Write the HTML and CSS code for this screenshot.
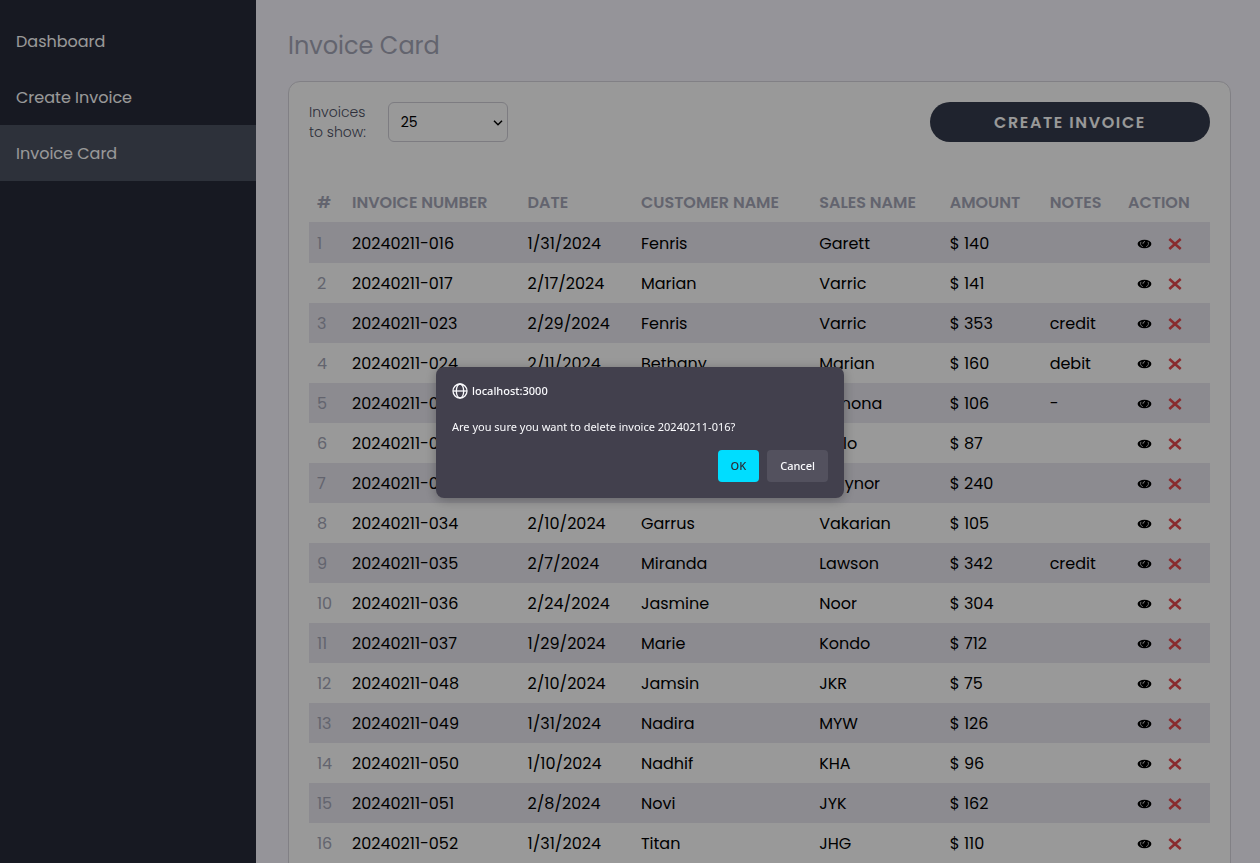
FILE: index.html
```html
<!DOCTYPE html>
<html lang="en">
<head>
<meta charset="utf-8">
<meta name="viewport" content="width=device-width, initial-scale=1">
<title>Invoice Card</title>
<link rel="stylesheet" href="styles.css">
</head>
<body>
<svg class="sprite" aria-hidden="true">
  <symbol id="eye" viewBox="0 0 14 10">
    <ellipse cx="7" cy="5" rx="6.900" ry="4.200" fill="currentColor"/>
    <path fill="none" stroke="#ccc" stroke-width=".9" d="M3.500 2.900C2.400 4.500 3.200 6.900 5.300 7.700M10.500 2.900C11.600 4.500 10.800 6.900 8.700 7.700"/>
    <path fill="none" stroke="#eee" stroke-width="1" d="M5.500 4.700C5.500 3.400 6.200 2.800 7.500 2.600"/>
  </symbol>
  <symbol id="cross" viewBox="0 0 14 12">
    <path fill="none" stroke="currentColor" stroke-width="2.600" d="M1.300 1 12.700 11M12.700 1 1.300 11"/>
  </symbol>
</svg>
<div class="app">
  <nav class="sidebar">
    <a class="nav-link" href="#">Dashboard</a>
    <a class="nav-link" href="#">Create Invoice</a>
    <a class="nav-link nav-link-active" href="#" aria-current="page">Invoice Card</a>
  </nav>
  <main class="content">
    <h1 class="title">Invoice Card</h1>
    <section class="card">
      <div class="toolbar">
        <div class="filter">
          <label class="filter-label" for="count">Invoices<br>to show:</label>
          <div class="select-wrap">
            <select class="filter-select" id="count"><option>10</option><option selected>25</option><option>50</option></select>
            <svg class="chevron" viewBox="0 0 10 6" aria-hidden="true"><path fill="none" stroke="#000" stroke-width="1.500" d="M1 .8 5 4.800 9 .8"/></svg>
          </div>
        </div>
        <button class="create" type="button">CREATE INVOICE</button>
      </div>
      <table class="invoices">
        <colgroup><col class="c-index"><col class="c-number"><col class="c-date"><col class="c-customer"><col class="c-sales"><col class="c-amount"><col class="c-notes"><col class="c-action"></colgroup>
        <thead><tr><th>#</th><th>INVOICE NUMBER</th><th>DATE</th><th>CUSTOMER NAME</th><th>SALES NAME</th><th>AMOUNT</th><th>NOTES</th><th>ACTION</th></tr></thead>
        <tbody>
          <tr><td>1</td><td>20240211-016</td><td>1/31/2024</td><td>Fenris</td><td>Garett</td><td>$ 140</td><td></td><td><div class="actions"><button class="icon-button" type="button" aria-label="View"><svg class="eye"><use href="#eye"/></svg></button><button class="icon-button danger" type="button" aria-label="Delete"><svg class="cross"><use href="#cross"/></svg></button></div></td></tr>
          <tr><td>2</td><td>20240211-017</td><td>2/17/2024</td><td>Marian</td><td>Varric</td><td>$ 141</td><td></td><td><div class="actions"><button class="icon-button" type="button" aria-label="View"><svg class="eye"><use href="#eye"/></svg></button><button class="icon-button danger" type="button" aria-label="Delete"><svg class="cross"><use href="#cross"/></svg></button></div></td></tr>
          <tr><td>3</td><td>20240211-023</td><td>2/29/2024</td><td>Fenris</td><td>Varric</td><td>$ 353</td><td>credit</td><td><div class="actions"><button class="icon-button" type="button" aria-label="View"><svg class="eye"><use href="#eye"/></svg></button><button class="icon-button danger" type="button" aria-label="Delete"><svg class="cross"><use href="#cross"/></svg></button></div></td></tr>
          <tr><td>4</td><td>20240211-024</td><td>2/11/2024</td><td>Bethany</td><td>Marian</td><td>$ 160</td><td>debit</td><td><div class="actions"><button class="icon-button" type="button" aria-label="View"><svg class="eye"><use href="#eye"/></svg></button><button class="icon-button danger" type="button" aria-label="Delete"><svg class="cross"><use href="#cross"/></svg></button></div></td></tr>
          <tr><td>5</td><td>20240211-025</td><td></td><td></td><td>Dimona</td><td>$ 106</td><td>-</td><td><div class="actions"><button class="icon-button" type="button" aria-label="View"><svg class="eye"><use href="#eye"/></svg></button><button class="icon-button danger" type="button" aria-label="Delete"><svg class="cross"><use href="#cross"/></svg></button></div></td></tr>
          <tr><td>6</td><td>20240211-032</td><td></td><td></td><td>Rollo</td><td>$ 87</td><td></td><td><div class="actions"><button class="icon-button" type="button" aria-label="View"><svg class="eye"><use href="#eye"/></svg></button><button class="icon-button danger" type="button" aria-label="Delete"><svg class="cross"><use href="#cross"/></svg></button></div></td></tr>
          <tr><td>7</td><td>20240211-033</td><td></td><td></td><td>Traynor</td><td>$ 240</td><td></td><td><div class="actions"><button class="icon-button" type="button" aria-label="View"><svg class="eye"><use href="#eye"/></svg></button><button class="icon-button danger" type="button" aria-label="Delete"><svg class="cross"><use href="#cross"/></svg></button></div></td></tr>
          <tr><td>8</td><td>20240211-034</td><td>2/10/2024</td><td>Garrus</td><td>Vakarian</td><td>$ 105</td><td></td><td><div class="actions"><button class="icon-button" type="button" aria-label="View"><svg class="eye"><use href="#eye"/></svg></button><button class="icon-button danger" type="button" aria-label="Delete"><svg class="cross"><use href="#cross"/></svg></button></div></td></tr>
          <tr><td>9</td><td>20240211-035</td><td>2/7/2024</td><td>Miranda</td><td>Lawson</td><td>$ 342</td><td>credit</td><td><div class="actions"><button class="icon-button" type="button" aria-label="View"><svg class="eye"><use href="#eye"/></svg></button><button class="icon-button danger" type="button" aria-label="Delete"><svg class="cross"><use href="#cross"/></svg></button></div></td></tr>
          <tr><td>10</td><td>20240211-036</td><td>2/24/2024</td><td>Jasmine</td><td>Noor</td><td>$ 304</td><td></td><td><div class="actions"><button class="icon-button" type="button" aria-label="View"><svg class="eye"><use href="#eye"/></svg></button><button class="icon-button danger" type="button" aria-label="Delete"><svg class="cross"><use href="#cross"/></svg></button></div></td></tr>
          <tr><td>11</td><td>20240211-037</td><td>1/29/2024</td><td>Marie</td><td>Kondo</td><td>$ 712</td><td></td><td><div class="actions"><button class="icon-button" type="button" aria-label="View"><svg class="eye"><use href="#eye"/></svg></button><button class="icon-button danger" type="button" aria-label="Delete"><svg class="cross"><use href="#cross"/></svg></button></div></td></tr>
          <tr><td>12</td><td>20240211-048</td><td>2/10/2024</td><td>Jamsin</td><td>JKR</td><td>$ 75</td><td></td><td><div class="actions"><button class="icon-button" type="button" aria-label="View"><svg class="eye"><use href="#eye"/></svg></button><button class="icon-button danger" type="button" aria-label="Delete"><svg class="cross"><use href="#cross"/></svg></button></div></td></tr>
          <tr><td>13</td><td>20240211-049</td><td>1/31/2024</td><td>Nadira</td><td>MYW</td><td>$ 126</td><td></td><td><div class="actions"><button class="icon-button" type="button" aria-label="View"><svg class="eye"><use href="#eye"/></svg></button><button class="icon-button danger" type="button" aria-label="Delete"><svg class="cross"><use href="#cross"/></svg></button></div></td></tr>
          <tr><td>14</td><td>20240211-050</td><td>1/10/2024</td><td>Nadhif</td><td>KHA</td><td>$ 96</td><td></td><td><div class="actions"><button class="icon-button" type="button" aria-label="View"><svg class="eye"><use href="#eye"/></svg></button><button class="icon-button danger" type="button" aria-label="Delete"><svg class="cross"><use href="#cross"/></svg></button></div></td></tr>
          <tr><td>15</td><td>20240211-051</td><td>2/8/2024</td><td>Novi</td><td>JYK</td><td>$ 162</td><td></td><td><div class="actions"><button class="icon-button" type="button" aria-label="View"><svg class="eye"><use href="#eye"/></svg></button><button class="icon-button danger" type="button" aria-label="Delete"><svg class="cross"><use href="#cross"/></svg></button></div></td></tr>
          <tr><td>16</td><td>20240211-052</td><td>1/31/2024</td><td>Titan</td><td>JHG</td><td>$ 110</td><td></td><td><div class="actions"><button class="icon-button" type="button" aria-label="View"><svg class="eye"><use href="#eye"/></svg></button><button class="icon-button danger" type="button" aria-label="Delete"><svg class="cross"><use href="#cross"/></svg></button></div></td></tr>
        </tbody>
      </table>
    </section>
  </main>
</div>
<div class="backdrop">
  <div class="dialog" role="alertdialog" aria-modal="true" aria-labelledby="origin" aria-describedby="message">
    <div class="dialog-head">
      <svg class="globe" viewBox="0 0 16 16" aria-hidden="true"><g fill="none" stroke="currentColor" stroke-width="1.300"><circle cx="8" cy="8" r="7"/><ellipse cx="8" cy="8" rx="3.700" ry="7"/><path d="M1 8h14"/></g></svg>
      <span id="origin">localhost:3000</span>
    </div>
    <p class="dialog-message" id="message">Are you sure you want to delete invoice 20240211-016?</p>
    <div class="dialog-buttons">
      <button class="dialog-button primary" type="button">OK</button>
      <button class="dialog-button" type="button">Cancel</button>
    </div>
  </div>
</div>
</body>
</html>
```
FILE: styles.css
```css
* { box-sizing: border-box; }
body {
  margin: 0;
  height: 100vh;
  overflow: hidden;
  background: #f8f7ff;
  color: #000;
  font: 16px/24px Poppins, Inter, "Liberation Sans", sans-serif;
}
button, select { font: inherit; }
.sprite { display: none; }
.app { display: flex; height: 100%; }
.sidebar {
  flex: 0 0 256px;
  padding-top: 13px;
  background: #272a39;
}
.nav-link {
  display: block;
  padding: 17px 16px 15px;
  color: #fff;
  text-decoration: none;
}
.nav-link-active { background: #4b5262; }
.content {
  flex: 1;
  min-width: 0;
  padding: 30px 29px 0 32px;
}
.title {
  margin: 0 0 19px;
  color: #a5a7b8;
  font-size: 24px;
  font-weight: 400;
  line-height: 32px;
}
.card {
  padding: 20px;
  border: 1px solid #d8d6de;
  border-radius: 12px;
  background: #fff;
}
.toolbar {
  display: flex;
  align-items: center;
  justify-content: space-between;
  margin-bottom: 40px;
}
.filter { display: flex; align-items: center; gap: 22px; }
.filter-label { color: #4b4f63; font-size: 14px; font-weight: 300; line-height: 20px; }
.select-wrap { position: relative; }
.filter-select {
  display: block;
  width: 120px;
  height: 40px;
  padding: 0 12px;
  appearance: none;
  border: 1px solid #d0cfd8;
  border-radius: 6px;
  background: #fff;
  color: #000;
  font-size: 14px;
}
.chevron {
  position: absolute;
  top: 18px;
  right: 5px;
  width: 10px;
  height: 6px;
  pointer-events: none;
}
.create {
  width: 280px;
  height: 40px;
  padding: 2px 0 0;
  border: 0;
  border-radius: 20px;
  background: #353b4d;
  color: #fff;
  font-size: 16px;
  font-weight: 600;
  letter-spacing: 0.1em;
}
.invoices { width: 100%; table-layout: fixed; border-collapse: separate; border-spacing: 0; }
.c-index { width: 35px; }
.c-number { width: 19.500%; }
.c-date { width: 12.600%; }
.c-customer { width: 19.800%; }
.c-sales { width: 14.500%; }
.c-amount { width: 11.100%; }
.c-notes { width: 8.700%; }
.c-action { width: 10%; }
.invoices th, .invoices td {
  height: 40px;
  padding: 2px 8px 0;
  text-align: left;
  white-space: nowrap;
}
.invoices th { height: 41px; border-bottom: 1px solid #e9e8f0; color: #a5a7b8; font-weight: 600; }
.invoices tbody tr:nth-child(odd) { background: #e9e8f0; }
.invoices td:first-child { color: #a5a7b8; }
.actions { display: flex; align-items: center; gap: 16px; padding-left: 9px; }
.icon-button { display: flex; padding: 0; border: 0; background: none; color: #000; }
.danger { color: #e5484d; }
.eye { width: 15px; height: 10px; }
.cross { width: 14px; height: 12px; }
.backdrop {
  position: fixed;
  inset: 0;
  display: grid;
  place-items: center;
  padding: 2px 0 0 20px;
  background: rgba(0, 0, 0, 0.4);
}
.dialog {
  width: 408px;
  padding: 16px;
  border-radius: 8px;
  background: #42404d;
  color: #fbfbfe;
  font: 11px/16px "Segoe UI", "Noto Sans", sans-serif;
  box-shadow: 0 2px 12px rgba(0, 0, 0, 0.3);
}
.dialog-head { display: flex; align-items: center; gap: 4px; font-weight: 500; }
.globe { width: 16px; height: 16px; }
.dialog-message { margin: 20px 0 15px; }
.dialog-buttons { display: flex; justify-content: flex-end; gap: 8px; }
.dialog-button {
  height: 32px;
  padding: 0 13px;
  border: 0;
  border-radius: 4px;
  background: #53515e;
  color: #fbfbfe;
  font-weight: 500;
}
.primary { background: #00ddff; color: #2b2a33; }
```
